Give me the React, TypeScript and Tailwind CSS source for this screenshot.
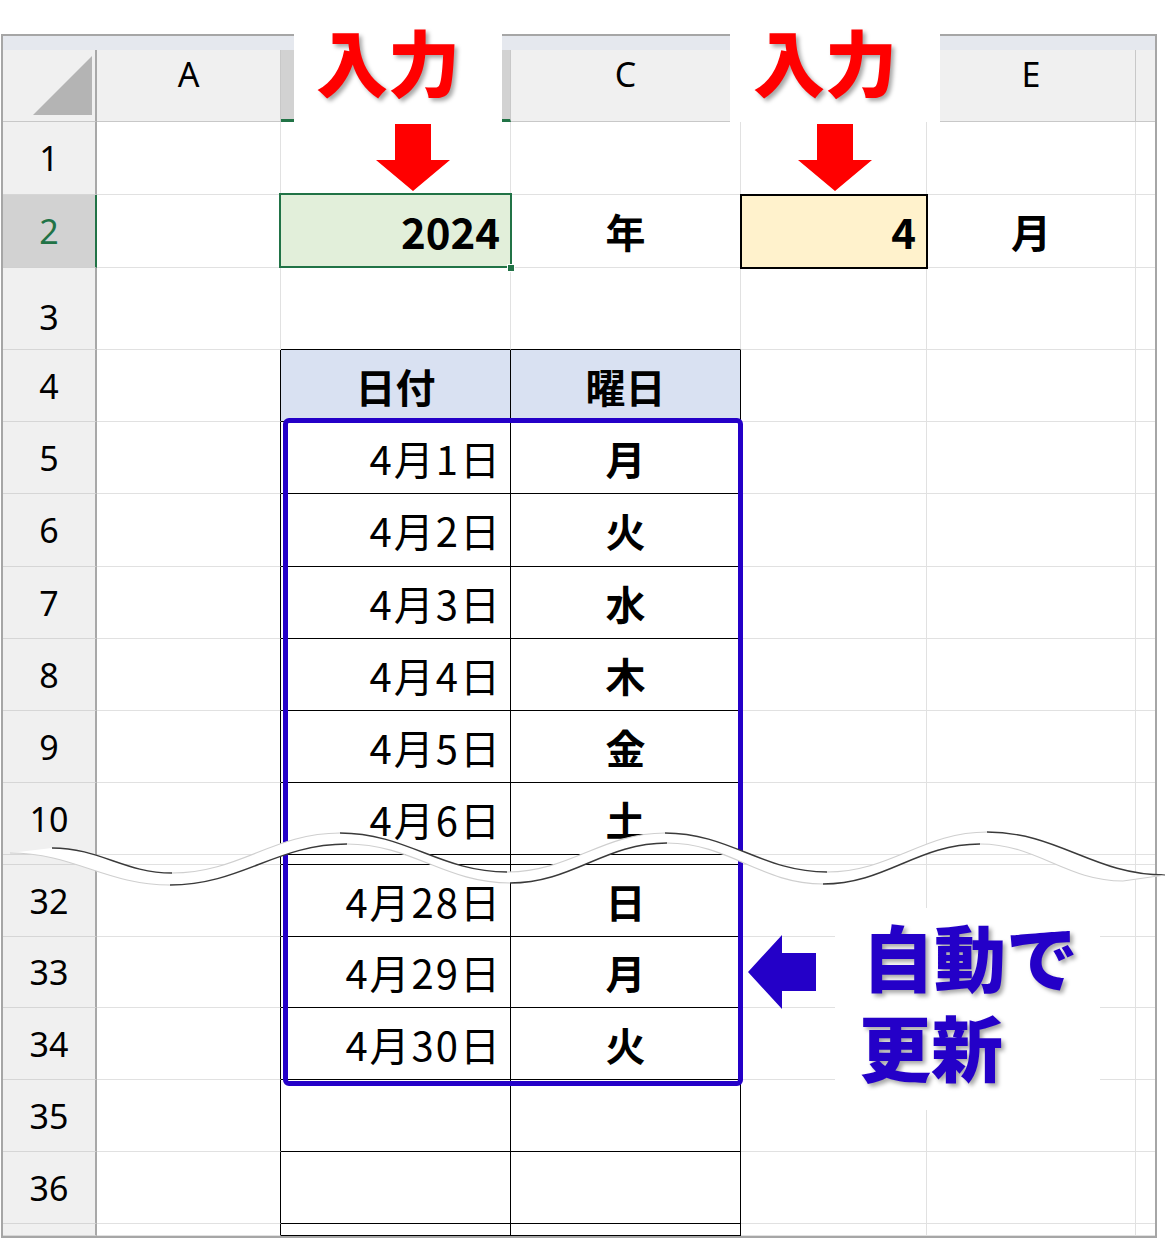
import React from 'react';

type RowDef = {
  n: string;
  h: string;
  kind: 'blank' | 'input' | 'pre' | 'head' | 'data' | 'empty' | 'gap' | 'tail';
  date?: string;
  day?: string;
};

const rows: RowDef[] = [
  { n: '1', h: 'h-[73px]', kind: 'blank' },
  { n: '2', h: 'h-[73px]', kind: 'input' },
  { n: '3', h: 'h-[82px]', kind: 'pre' },
  { n: '4', h: 'h-[72px]', kind: 'head' },
  { n: '5', h: 'h-[72px]', kind: 'data', date: '4月1日', day: '月' },
  { n: '6', h: 'h-[73px]', kind: 'data', date: '4月2日', day: '火' },
  { n: '7', h: 'h-[72px]', kind: 'data', date: '4月3日', day: '水' },
  { n: '8', h: 'h-[72px]', kind: 'data', date: '4月4日', day: '木' },
  { n: '9', h: 'h-[72px]', kind: 'data', date: '4月5日', day: '金' },
  { n: '10', h: 'h-[72px]', kind: 'data', date: '4月6日', day: '土' },
  { n: '', h: 'h-[10px]', kind: 'gap' },
  { n: '32', h: 'h-[72px]', kind: 'data', date: '4月28日', day: '日' },
  { n: '33', h: 'h-[71px]', kind: 'data', date: '4月29日', day: '月' },
  { n: '34', h: 'h-[72px]', kind: 'data', date: '4月30日', day: '火' },
  { n: '35', h: 'h-[72px]', kind: 'empty' },
  { n: '36', h: 'h-[72px]', kind: 'empty' },
  { n: '', h: 'h-[12px]', kind: 'tail' },
];

// wave break ribbon, key points read off the picture
const topPts: [number, number][] = [
  [52, 848], [172, 873], [340, 833], [507, 872], [665, 833], [827, 872], [987, 832], [1165, 875],
];
const botPts: [number, number][] = [
  [10, 853], [170, 885], [347, 844], [510, 883], [667, 843], [823, 884], [980, 844], [1123, 881],
];

const curve = (a: [number, number], b: [number, number]) => {
  const dx = b[0] - a[0];
  return `C ${a[0] + dx * 0.4} ${a[1]} ${b[0] - dx * 0.4} ${b[1]} ${b[0]} ${b[1]}`;
};

const ribbon = () => {
  let d = `M ${topPts[0][0]} ${topPts[0][1]} `;
  for (let i = 1; i < topPts.length; i++) d += curve(topPts[i - 1], topPts[i]) + ' ';
  d += `L ${botPts[botPts.length - 1][0]} ${botPts[botPts.length - 1][1]} `;
  for (let i = botPts.length - 1; i > 0; i--) d += curve(botPts[i], botPts[i - 1]) + ' ';
  return d + 'Z';
};

const segs = (pts: [number, number][], darkWhenDown: boolean) =>
  pts.slice(1).map((p, i) => {
    const a = pts[i];
    const down = p[1] > a[1];
    return {
      d: `M ${a[0]} ${a[1]} ${curve(a, p)}`,
      dark: darkWhenDown ? down : !down,
    };
  });

const WaveBreak = () => (
  <svg className="absolute left-0 top-0 pointer-events-none" width="1170" height="1240">
    <path d={ribbon()} fill="#ffffff" />
    {segs(topPts, true).map((s, i) => (
      <path key={'t' + i} d={s.d} fill="none" stroke={s.dark ? '#3a3a3a' : '#cfcfcf'} strokeWidth={s.dark ? 1.4 : 1.2} />
    ))}
    {segs(botPts, false).map((s, i) => (
      <path key={'b' + i} d={s.d} fill="none" stroke={s.dark ? '#3a3a3a' : '#cfcfcf'} strokeWidth={s.dark ? 1.4 : 1.2} />
    ))}
    <path d="M 1123 881 L 1165 875" stroke="#cfcfcf" strokeWidth="1.2" />
  </svg>
);

const DownArrow = ({ cx }: { cx: number }) => (
  <svg className="absolute top-[122px] pointer-events-none" style={{ left: cx - 40 }} width="80" height="72">
    <polygon points="22,2 58,2 58,38 77,38 40,69 3,38 22,38" fill="#ff0000" />
  </svg>
);

const Row = ({ r }: { r: RowDef }) => {
  const inTable = r.kind === 'head' || r.kind === 'data' || r.kind === 'empty' || r.kind === 'gap' || r.kind === 'tail';
  const sel = r.kind === 'input';
  const grid = 'border-r border-b border-[#e1e1e1]';
  const tableCell = 'border-r border-b border-r-black border-b-black';

  return (
    <div className={`flex ${r.h}`}>
      <div
        className={`w-[94px] shrink-0 flex justify-center text-[34px] leading-none font-['Noto_Sans',sans-serif] border-r-2 border-b ${
          sel ? 'bg-[#d2d2d2] text-[#217346] border-r-[#217346] border-b-[#d0d0d0]' : 'bg-[#f0f0f0] text-black border-r-[#a8a8a8] border-b-[#d6d6d6]'
        } ${r.kind === 'pre' ? 'items-center pt-[16px]' : 'items-center'} ${r.kind === 'gap' ? 'border-b-[#b8b8b8]' : ''}`}
      >
        {r.n}
      </div>
      {/* A */}
      <div className={`w-[184px] shrink-0 border-r border-b border-b-[#e1e1e1] ${inTable ? 'border-r-black' : 'border-r-[#e1e1e1]'}`} />
      {/* B */}
      {r.kind === 'input' ? (
        <div className={`relative w-[230px] shrink-0 flex items-center justify-end pr-[10px] bg-[#e2efda] ${grid}`}>
          <span className="text-[42px] font-bold leading-none">2024</span>
          <div className="absolute -left-[2px] -top-[2px] w-[233px] h-[75px] border-2 border-[#217346]" />
          <div className="absolute -right-[5px] -bottom-[5px] w-[8px] h-[8px] bg-[#217346] border border-white" />
        </div>
      ) : r.kind === 'head' ? (
        <div className={`w-[230px] shrink-0 flex items-center justify-center bg-[#d9e1f2] ${tableCell}`}>
          <span className="text-[40px] font-bold leading-none">日付</span>
        </div>
      ) : r.kind === 'data' ? (
        <div className={`w-[230px] shrink-0 flex items-center justify-end pr-[8px] ${tableCell}`}>
          <span className="text-[40px] leading-none tracking-[2px]">{r.date}</span>
        </div>
      ) : inTable ? (
        <div className={`w-[230px] shrink-0 ${tableCell}`} />
      ) : (
        <div className={`w-[230px] shrink-0 border-r border-b ${r.kind === 'pre' ? 'border-r-[#e1e1e1] border-b-black' : 'border-[#e1e1e1]'}`} />
      )}
      {/* C */}
      {r.kind === 'input' ? (
        <div className={`w-[230px] shrink-0 flex items-center justify-center ${grid}`}>
          <span className="text-[40px] font-bold leading-none">年</span>
        </div>
      ) : r.kind === 'head' ? (
        <div className={`w-[230px] shrink-0 flex items-center justify-center bg-[#d9e1f2] ${tableCell}`}>
          <span className="text-[40px] font-bold leading-none">曜日</span>
        </div>
      ) : r.kind === 'data' ? (
        <div className={`w-[230px] shrink-0 flex items-center justify-center ${tableCell}`}>
          <span className="text-[40px] font-bold leading-none">{r.day}</span>
        </div>
      ) : inTable ? (
        <div className={`w-[230px] shrink-0 ${tableCell}`} />
      ) : (
        <div className={`w-[230px] shrink-0 border-r border-b ${r.kind === 'pre' ? 'border-r-[#e1e1e1] border-b-black' : 'border-[#e1e1e1]'}`} />
      )}
      {/* D */}
      {r.kind === 'input' ? (
        <div className={`relative w-[186px] shrink-0 flex items-center justify-end pr-[10px] bg-[#fff2cc] ${grid}`}>
          <span className="text-[42px] font-bold leading-none">4</span>
          <div className="absolute -left-[1px] -top-[1px] w-[188px] h-[75px] border-2 border-black" />
        </div>
      ) : (
        <div className={`w-[186px] shrink-0 ${grid}`} />
      )}
      {/* E */}
      {r.kind === 'input' ? (
        <div className={`w-[209px] shrink-0 flex items-center justify-center ${grid}`}>
          <span className="text-[40px] font-bold leading-none">月</span>
        </div>
      ) : (
        <div className={`w-[209px] shrink-0 ${grid}`} />
      )}
      <div className="flex-1 border-b border-[#e1e1e1]" />
    </div>
  );
};

const App = () => {
  return (
    <div className="relative w-[1170px] h-[1240px] overflow-hidden bg-white text-black font-['Noto_Sans_CJK_JP','Noto_Sans',sans-serif]">
      <div className="ml-[1px] mt-[34px] w-[1156px] h-[1204px] border-2 border-[#a6a6a6] overflow-hidden">
        <div className="h-[14px] bg-[#e5e8ee]" />
        {/* column headers; B and D sit under the white label boxes */}
        <div className="flex h-[72px] font-['Noto_Sans',sans-serif] text-[34px] leading-none">
          <div className="relative w-[94px] shrink-0 bg-[#f0f0f0] border-r-2 border-b border-r-[#a8a8a8] border-b-[#c8c8c8]">
            <svg className="absolute left-[30px] top-[6px]" width="60" height="60">
              <polygon points="0,59 59,0 59,59" fill="#b4b4b4" />
            </svg>
          </div>
          <div className="w-[184px] shrink-0 flex items-center justify-center pb-[24px] bg-[#f0f0f0] border-r border-b border-r-[#c8c8c8] border-b-[#c8c8c8]">A</div>
          <div className="w-[230px] shrink-0 bg-[#d2d2d2] border-r border-b-[3px] border-r-[#c8c8c8] border-b-[#217346]" />
          <div className="w-[230px] shrink-0 flex items-center justify-center pb-[24px] bg-[#f0f0f0] border-r border-b border-r-[#c8c8c8] border-b-[#c8c8c8]">C</div>
          <div className="w-[186px] shrink-0 bg-[#f0f0f0] border-r border-b border-r-[#c8c8c8] border-b-[#c8c8c8]" />
          <div className="w-[209px] shrink-0 flex items-center justify-center pb-[24px] bg-[#f0f0f0] border-r border-b border-r-[#c8c8c8] border-b-[#c8c8c8]">E</div>
          <div className="flex-1 bg-[#f0f0f0] border-b border-[#c8c8c8]" />
        </div>
        {rows.map((r, i) => (
          <Row key={i} r={r} />
        ))}
      </div>

      {/* blue frame round the filled dates */}
      <div className="absolute left-[283px] top-[418px] w-[460px] h-[668px] border-[5px] border-[#2400c8] rounded-[6px] pointer-events-none" />

      <WaveBreak />

      {/* 入力 labels */}
      <div className="absolute left-[294px] top-[20px] w-[208px] h-[102px] bg-white flex justify-center pt-[4px] pr-[20px]">
        <span className="text-[72px] font-black leading-none text-[#ff0000] [text-shadow:3px_3px_4px_rgba(0,0,0,0.35)]">入力</span>
      </div>
      <div className="absolute left-[730px] top-[20px] w-[210px] h-[102px] bg-white flex justify-center pt-[4px] pr-[20px]">
        <span className="text-[72px] font-black leading-none text-[#ff0000] [text-shadow:3px_3px_4px_rgba(0,0,0,0.35)]">入力</span>
      </div>
      <DownArrow cx={413} />
      <DownArrow cx={835} />

      {/* 自動で更新 */}
      <svg className="absolute left-[745px] top-[932px]" width="75" height="80">
        <polygon points="3,40 37,3 37,21 71,21 71,59 37,59 37,77" fill="#2400c8" />
      </svg>
      <div className="absolute left-[835px] top-[908px] w-[265px] h-[202px] bg-white flex flex-col gap-[18px] pl-[27px] pt-[11px] text-[72px] font-black leading-none text-[#2400c8] [text-shadow:3px_3px_4px_rgba(0,0,0,0.35)]">
        <span>自動で</span>
        <span className="-ml-[3px]">更新</span>
      </div>
    </div>
  );
};

export default App;
